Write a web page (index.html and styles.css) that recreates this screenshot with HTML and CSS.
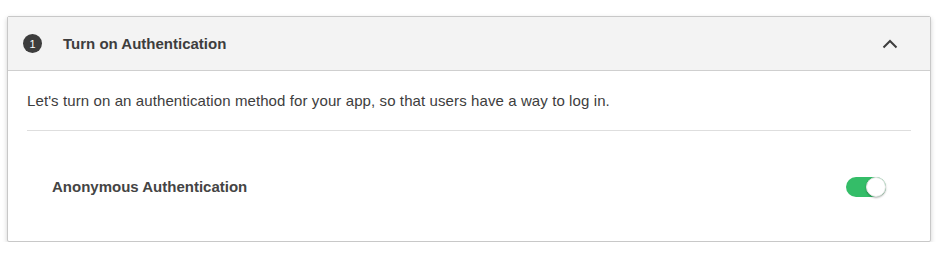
FILE: index.html
```html
<!DOCTYPE html>
<html>
<head>
<meta charset="utf-8">
<link rel="stylesheet" href="styles.css">
</head>
<body>
<div class="card">
  <div class="card-header">
    <span class="badge">1</span>
    <span class="title">Turn on Authentication</span>
    <svg class="chevron" width="16" height="10" viewBox="0 0 16 10"><path d="M1.5 8.5 L8 2 L14.5 8.5" fill="none" stroke="#3d3d3d" stroke-width="2"/></svg>
  </div>
  <div class="card-body">
    <p class="intro">Let's turn on an authentication method for your app, so that users have a way to log in.</p>
    <div class="divider"></div>
    <div class="row">
      <span class="row-label">Anonymous Authentication</span>
      <span class="toggle"><span class="knob"></span></span>
    </div>
  </div>
</div>
</body>
</html>
```
FILE: styles.css
```css
html, body { margin: 0; padding: 0; background: #fff; }
body { padding: 16px 8px 0 7px; font-family: "Liberation Sans", Arial, sans-serif; color: #3d3d3d; }
.card {
  border: 1px solid #c8c8c8;
  border-radius: 2px;
  box-shadow: 0 2px 5px rgba(0,0,0,0.18);
  background: #fff;
}
.card-header {
  display: flex;
  align-items: center;
  height: 53px;
  background: #f3f3f3;
  border-bottom: 1px solid #cfcfcf;
  padding: 0 32px 0 15px;
}
.badge {
  width: 19px; height: 19px; border-radius: 50%;
  background: #3d3d3d; color: #fff;
  font-size: 11px; display: flex; align-items: center; justify-content: center;
}
.title { margin-left: 21px; font-size: 15px; font-weight: bold; color: #3d3d3d; flex: 1; }
.chevron { display: block; }
.card-body { padding: 0 19px 0 19px; }
.intro { margin: 0; padding-top: 20px; font-size: 15px; line-height: 20px; color: #3d3d3d; letter-spacing: 0.1px; }
.divider { height: 1px; background: #dedede; margin-top: 19px; }
.row {
  display: flex; align-items: center; justify-content: space-between;
  height: 110px; padding: 1px 25px 0 25px; box-sizing: border-box;
}
.row-label { font-size: 15px; font-weight: bold; color: #444; }
.toggle {
  position: relative; width: 40px; height: 20px; border-radius: 10px;
  background: #34bd68;
}
.knob {
  position: absolute; right: 0; top: 0; width: 20px; height: 20px; border-radius: 50%;
  background: #fff; box-shadow: 0 1px 2px rgba(0,0,0,0.3); box-sizing: border-box; border: 1px solid #e5e5e5;
}
```
